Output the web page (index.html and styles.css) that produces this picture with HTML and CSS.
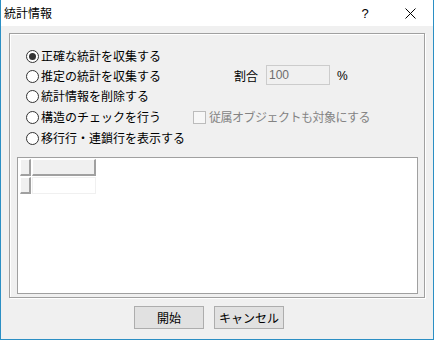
FILE: index.html
```html
<!DOCTYPE html>
<html lang="ja">

<head>
    <meta charset="UTF-8">
    <title>統計情報</title>
    <link rel="stylesheet" href="styles.css">
</head>

<body>
    <div class="dialog">
        <div class="titlebar">
            <span class="title">統計情報</span>
            <span class="tb-btn help">?</span>
            <span class="tb-btn close">
                <svg width="11" height="11" viewBox="0 0 11 11">
                    <path d="M0.5 0.5 L10.5 10.5 M10.5 0.5 L0.5 10.5" stroke="#000" stroke-width="1" fill="none" />
                </svg>
            </span>
        </div>

        <div class="content">
            <div class="group">
                <div class="row">
                    <label class="opt"><span class="radio checked"></span>正確な統計を収集する</label>
                </div>
                <div class="row">
                    <label class="opt opt-rate"><span class="radio"></span>推定の統計を収集する</label>
                    <span class="rate-label">割合</span>
                    <span class="rate-box">100</span>
                    <span class="pct">%</span>
                </div>
                <div class="row">
                    <label class="opt"><span class="radio"></span>統計情報を削除する</label>
                </div>
                <div class="row row-gap">
                    <label class="opt opt-check"><span class="radio"></span>構造のチェックを行う</label>
                    <label class="sub"><span class="checkbox"></span>従属オブジェクトも対象にする</label>
                </div>
                <div class="row row-gap">
                    <label class="opt"><span class="radio"></span>移行行・連鎖行を表示する</label>
                </div>

                <div class="list">
                    <div class="grid">
                        <div class="cell head"></div>
                        <div class="cell head"></div>
                        <div class="cell head"></div>
                        <div class="cell data"></div>
                    </div>
                </div>
            </div>

            <div class="buttons">
                <button class="btn">開始</button>
                <button class="btn">キャンセル</button>
            </div>
        </div>
    </div>
</body>

</html>
```

FILE: styles.css
```css
* {
    margin: 0;
    padding: 0;
    box-sizing: border-box;
}

body {
    font-family: "Noto Sans CJK JP", "Noto Sans", sans-serif;
    font-size: 12px;
    color: #000;
    background-color: #fff;
}

/* Window */
.dialog {
    width: 434px;
    height: 340px;
    border: 1px solid #2b8fc4;
    border-top: none;
    display: flex;
    flex-direction: column;
    background-color: #f0f0f0;
}

/* Title bar */
.titlebar {
    height: 26px;
    background-color: #fff;
    display: flex;
    align-items: center;
}

.title {
    flex: 1;
    padding-left: 3px;
    line-height: 26px;
    font-size: 12px;
}

.tb-btn {
    width: 46px;
    height: 26px;
    display: flex;
    align-items: center;
    justify-content: center;
}

.help {
    font-family: "Liberation Sans", sans-serif;
    font-size: 13px;
    padding-left: 2px;
}

.close svg {
    display: block;
}

/* Body */
.content {
    flex: 1;
    padding: 7px 8px 0 8px;
}

.group {
    height: 265px;
    border: 1px solid #a0a0a0;
    box-shadow: inset 1px 1px 0 #fff, 1px 1px 0 #fff;
    padding-top: 12px;
    display: flex;
    flex-direction: column;
}

.row {
    height: 20px;
    padding-left: 16px;
    display: flex;
    align-items: center;
    line-height: 20px;
}

.row-gap {
    margin-top: 1px;
}

.opt {
    display: flex;
    align-items: center;
    white-space: nowrap;
}

.opt-rate {
    width: 208px;
}

.opt-check {
    width: 167px;
}

.radio {
    width: 13px;
    height: 13px;
    border: 1px solid #333;
    border-radius: 50%;
    background-color: #fff;
    margin-right: 2px;
    display: flex;
    align-items: center;
    justify-content: center;
}

.radio.checked::after {
    content: "";
    width: 7px;
    height: 7px;
    border-radius: 50%;
    background-color: #333;
}

.rate-label {
    width: 32px;
}

.rate-box {
    width: 64px;
    height: 20px;
    margin-bottom: 2px;
    border: 1px solid #ccc;
    background-color: #f0f0f0;
    color: #6d6d6d;
    padding-left: 2px;
    line-height: 18px;
    font-family: "Liberation Sans", sans-serif;
}

.pct {
    margin-left: 7px;
    font-family: "Liberation Sans", sans-serif;
}

.sub {
    display: flex;
    align-items: center;
    color: #838383;
    letter-spacing: -0.5px;
    white-space: nowrap;
}

.checkbox {
    width: 13px;
    height: 13px;
    border: 1px solid #bcbcbc;
    background-color: #f7f7f7;
    margin-right: 3px;
}

/* List */
.list {
    margin: 9px 6px 0 7px;
    height: 137px;
    border: 1px solid #a0a0a0;
    background-color: #fff;
    padding: 1px 0 0 2px;
}

.grid {
    display: grid;
    grid-template-columns: 11px 64px;
    grid-template-rows: 17px 17px;
    gap: 1px;
}

.cell.head {
    background-color: #f0f0f0;
    border-top: 1px solid #fff;
    border-left: 1px solid #fff;
    border-right: 2px solid #a0a0a0;
    border-bottom: 2px solid #a0a0a0;
}

.cell.data {
    background-color: #fff;
    border: 1px solid #f0f0f0;
}

/* Buttons */
.buttons {
    display: flex;
    gap: 10px;
    margin-top: 8px;
    padding-left: 125px;
}

.btn {
    width: 70px;
    height: 23px;
    background-color: #e1e1e1;
    border: 1px solid #adadad;
    font-family: "Noto Sans CJK JP", sans-serif;
    font-size: 12px;
    color: #000;
}
```
